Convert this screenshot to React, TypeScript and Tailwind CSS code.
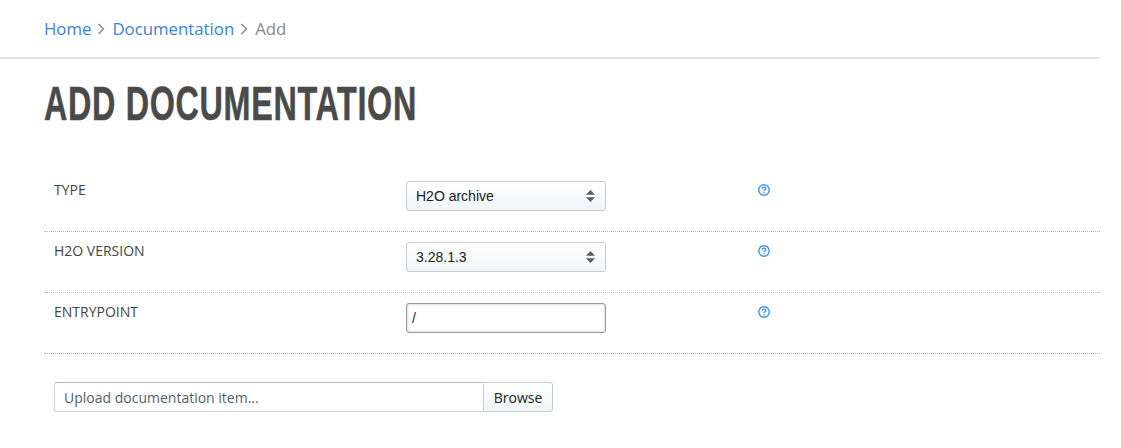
import { ReactNode } from "react";

const rows = [
  { label: "TYPE", value: "H2O archive", kind: "select" },
  { label: "H2O VERSION", value: "3.28.1.3", kind: "select" },
  { label: "ENTRYPOINT", value: "/", kind: "input" },
];

function HelpIcon() {
  return (
    <svg width="12" height="12" viewBox="0 0 12 12" fill="none" className="block">
      <circle cx="6" cy="6" r="5.2" stroke="#3b93ee" strokeWidth="1.4" />
      <path d="M4.3 4.7c0-1 .8-1.6 1.8-1.6 1 0 1.7.6 1.7 1.5 0 1.3-1.7 1.2-1.7 2.5" stroke="#3b93ee" strokeWidth="1.4" />
      <rect x="5.4" y="7.9" width="1.3" height="1.3" fill="#3b93ee" />
    </svg>
  );
}

function SelectArrows() {
  return (
    <svg width="9" height="12" viewBox="0 0 9 12" className="block">
      <path d="M4.5 0L9 4.7H0z" fill="#4f5f6f" />
      <path d="M4.5 12L0 7.3h9z" fill="#4f5f6f" />
    </svg>
  );
}

function Field({ kind, children }: { kind: string; children: ReactNode }) {
  if (kind === "select") {
    return (
      <div className="flex h-[30px] w-[200px] items-center justify-between rounded-[3px] border border-[#c8ccd0] bg-gradient-to-b from-white to-[#f1f5f8] pl-[9px] pr-[10px] font-['Liberation_Sans',sans-serif] text-[14px] text-[#222]">
        {children}
        <SelectArrows />
      </div>
    );
  }
  return (
    <div className="flex h-[30px] w-[200px] items-center rounded-[3px] border border-[#9a9a9a] bg-white pl-[5px] font-['Liberation_Sans',sans-serif] text-[14px] text-[#222] shadow-[inset_0_0_3px_rgba(0,0,0,0.25)]">
      {children}
    </div>
  );
}

export default function App() {
  return (
    <div className="h-[448px] w-[1121px] overflow-hidden bg-white font-['Open_Sans',sans-serif]">
      <div className="w-[1100px]">
        {/* Breadcrumb */}
        <nav className="flex h-[57px] items-center gap-[6px] pl-[44px] text-[16.8px] text-[#8a8a8a]">
          <a className="text-[#3b82dc]">Home</a>
          <svg width="9" height="12" viewBox="0 0 9 12" fill="none">
            <path d="M1.5 1l5 5-5 5" stroke="#8a8a8a" strokeWidth="1.5" />
          </svg>
          <a className="text-[#3b82dc]">Documentation</a>
          <svg width="9" height="12" viewBox="0 0 9 12" fill="none">
            <path d="M1.5 1l5 5-5 5" stroke="#8a8a8a" strokeWidth="1.5" />
          </svg>
          <span>Add</span>
        </nav>
        <div className="h-[2px] bg-[#e2e2e2]" />

        {/* No condensed face installed, so the heading is squeezed and thickened */}
        <div className="mt-[14px] pl-[44px]">
          <h1 className="origin-left scale-x-[0.66] whitespace-nowrap font-['Liberation_Sans',sans-serif] text-[49px] leading-[60px] font-bold tracking-[1px] text-[#4a4a4a] [-webkit-text-stroke:0.5px_#4a4a4a]">
            ADD DOCUMENTATION
          </h1>
        </div>

        {/* Form rows */}
        <div className="mt-[38px] ml-[44px]">
          {rows.map((row) => (
            <div key={row.label} className="flex h-[61px] border-b border-dotted border-[#b4b4b4] pt-[10px]">
              <div className="w-[362px] text-[14px] leading-[18px] text-[#444]">
                <span className="pl-[10px]">{row.label}</span>
              </div>
              <div className="w-[342px]">
                <Field kind={row.kind}>{row.value}</Field>
              </div>
              <div className="pt-[3px] pl-[10px]">
                <HelpIcon />
              </div>
            </div>
          ))}
        </div>

        {/* Upload */}
        <div className="mt-[28px] ml-[54px] flex h-[30px] w-[499px] text-[14px]">
          <div className="flex flex-1 items-center rounded-l-[3px] border border-r-0 border-[#d0d3d6] border-t-[#b8b8b8] pl-[9px] text-[#4f5f6f]">
            Upload documentation item...
          </div>
          <div className="flex w-[70px] items-center justify-center rounded-r-[3px] border border-[#c8ccd0] bg-gradient-to-b from-white to-[#f1f5f8] text-[#222]">
            Browse
          </div>
        </div>
      </div>
    </div>
  );
}
